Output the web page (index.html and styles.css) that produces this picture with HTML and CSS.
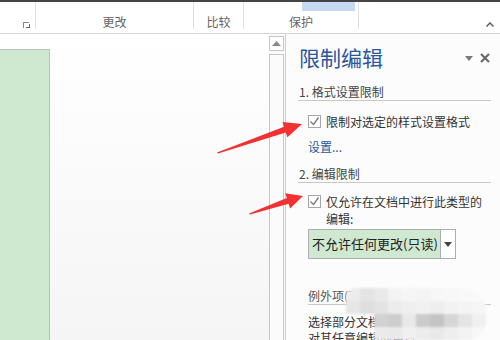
FILE: index.html
```html
<!DOCTYPE html>
<html lang="zh-CN">
<head>
  <meta charset="UTF-8">
  <meta name="viewport" content="width=device-width, initial-scale=1.0">
  <title>限制编辑</title>
  <link rel="stylesheet" href="styles.css">
</head>
<body>
  <div class="topbar"></div>
  <div class="ribbon">
    <div class="group group-first">
      <span class="launcher"></span>
    </div>
    <div class="group group-change"><span class="label">更改</span></div>
    <div class="group group-compare"><span class="label">比较</span></div>
    <div class="group group-protect">
      <div class="hilite"></div>
      <span class="label">保护</span>
    </div>
    <div class="group group-last">
      <svg class="caret" width="8" height="5" viewBox="0 0 8 5"><polyline points="0.5,4.5 4,1 7.5,4.5" fill="none" stroke="#555" stroke-width="1.4"/></svg>
    </div>
  </div>

  <div class="main">
    <div class="doc">
      <div class="page"></div>
    </div>
    <div class="scroll">
      <div class="scroll-btn">
        <svg width="9" height="5" viewBox="0 0 9 5"><polygon points="0,5 4.5,0 9,5" fill="#8a8a8a"/></svg>
      </div>
      <div class="scroll-track"></div>
    </div>

    <div class="pane">
      <div class="pane-head">
        <h1 class="pane-title">限制编辑</h1>
        <div class="pane-tools">
          <svg width="8" height="5" viewBox="0 0 8 5"><polygon points="0,0 8,0 4,5" fill="#777"/></svg>
          <svg width="10" height="10" viewBox="0 0 10 10"><path d="M1 1 L9 9 M9 1 L1 9" stroke="#666" stroke-width="2"/></svg>
        </div>
      </div>

      <h2 class="section">1. 格式设置限制</h2>
      <label class="check-row">
        <span class="box"><svg width="11" height="11" viewBox="0 0 11 11"><polyline points="1.5,5.5 4.5,8.5 9.5,1.5" fill="none" stroke="#777" stroke-width="1.3"/></svg></span>
        <span>限制对选定的样式设置格式</span>
      </label>
      <a class="link">设置...</a>

      <h2 class="section section-two">2. 编辑限制</h2>
      <label class="check-row check-row-two">
        <span class="box"><svg width="11" height="11" viewBox="0 0 11 11"><polyline points="1.5,5.5 4.5,8.5 9.5,1.5" fill="none" stroke="#777" stroke-width="1.3"/></svg></span>
        <span>仅允许在文档中进行此类型的<br>编辑:</span>
      </label>
      <div class="select">
        <span class="select-value">不允许任何更改(只读)</span>
        <span class="select-arrow"><svg width="8" height="5" viewBox="0 0 8 5"><polygon points="0,0 8,0 4,5" fill="#444"/></svg></span>
      </div>

      <h3 class="sub">例外项(可选)</h3>
      <p class="desc">选择部分文档内容，并选择可<br>对其任意编辑的用户。</p>
    </div>
  </div>

  <div class="mosaic">
    <span style="background:#ececec"></span><span style="background:#e4e4e4"></span><span style="background:#e9e9e9"></span><span style="background:#f3f3f3"></span><span style="background:#f6f6f6"></span><span style="background:#f4f4f4"></span><span style="background:#f7f7f7"></span><span style="background:#f8f8f8"></span><span style="background:#f9f9f9"></span><span style="background:#fafafa"></span>
    <span style="background:#e6e6e6"></span><span style="background:#dedede"></span><span style="background:#e3e3e3"></span><span style="background:#ececec"></span><span style="background:#efefef"></span><span style="background:#f1f1f1"></span><span style="background:#eeeeee"></span><span style="background:#f2f2f2"></span><span style="background:#f4f4f4"></span><span style="background:#f6f6f6"></span>
    <span></span><span></span><span style="background:#d2d2d2"></span><span style="background:#cdcdcd"></span><span style="background:#e8e8e8"></span><span style="background:#cbcbcb"></span><span style="background:#c4c4c4"></span><span style="background:#d6d6d6"></span><span style="background:#e4e4e4"></span><span style="background:#f0f0f0"></span>
    <span></span><span></span><span style="background:#ebebeb"></span><span style="background:#e9e9e9"></span><span style="background:#f0f0f0"></span><span style="background:#ececec"></span><span style="background:#e8e8e8"></span><span style="background:#eeeeee"></span><span style="background:#f3f3f3"></span><span style="background:#f7f7f7"></span>
  </div>

  <svg class="arrows" width="500" height="340" viewBox="0 0 500 340">
    <polygon points="217,152.5 284,126.8 282.4,122 302,124 287.4,137.2 285.8,132.5 218,153.5" fill="#f23232"/>
    <polygon points="249,213.5 286.8,197.9 285.3,193.2 303,196 290.1,208.4 288.6,203.7 250,214.5" fill="#f23232"/>
  </svg>
</body>
</html>
```

FILE: styles.css
```css
body {
  margin: 0;
  width: 500px;
  height: 340px;
  overflow: hidden;
  position: relative;
  font-family: "Noto Sans CJK SC", "Noto Sans", sans-serif;
  font-size: 12px;
  color: #444;
  background: #fff;
}
.topbar {
  height: 2px;
  background: #444;
}
.ribbon {
  display: flex;
  height: 31px;
  border-bottom: 1px solid #d4d4d4;
  background: #fff;
}
.group {
  height: 27px;
  border-right: 1px solid #e1e1e1;
  display: flex;
  flex-direction: column;
  justify-content: flex-end;
  align-items: center;
  box-sizing: border-box;
}
.group-first { width: 36px; align-items: flex-end; }
.group-change { width: 158px; }
.group-compare { width: 50px; }
.group-protect { width: 115px; position: relative; }
.group-last { flex: 1; border-right: none; align-items: flex-end; }
.label {
  line-height: 14px;
  color: #666;
}
.launcher {
  width: 5px;
  height: 5px;
  border-left: 1px solid #888;
  border-top: 1px solid #888;
  margin: 0 6px 1px 0;
  position: relative;
}
.launcher::after {
  content: "";
  position: absolute;
  right: -1px;
  bottom: 0;
  width: 3px;
  height: 3px;
  border-right: 1px solid #666;
  border-bottom: 1px solid #666;
}
.hilite {
  position: absolute;
  top: 0;
  left: 58px;
  width: 53px;
  height: 9px;
  background: #c5d9f1;
}
.caret {
  margin: 0 6px 2px 0;
}
.main {
  display: flex;
  height: 306px;
}
.doc {
  width: 269px;
  background: linear-gradient(#fff, #f5f5f5);
}
.page {
  margin-top: 15px;
  width: 49px;
  height: 300px;
  background: #cfe8d0;
  border-top: 1px solid #c0c0c0;
  border-right: 1px solid #bdbdbd;
}
.scroll {
  width: 17px;
  box-sizing: border-box;
  border-right: 1px solid #cfcfcf;
  display: flex;
  flex-direction: column;
  background: #fafafa;
}
.scroll-btn {
  margin-top: 2px;
  width: 15px;
  height: 15px;
  box-sizing: border-box;
  border: 1px solid #c6c6c6;
  background: #fff;
  display: flex;
  align-items: center;
  justify-content: center;
}
.scroll-track {
  margin-top: 3px;
  width: 15px;
  flex: 1;
  box-sizing: border-box;
  border: 1px solid #c6c6c6;
  border-bottom: none;
  background: #fbfbfb;
}
.pane {
  flex: 1;
  padding: 0 9px 0 12px;
  background: #fcfcfc;
}
.pane-head {
  margin-top: 10px;
  display: flex;
  justify-content: space-between;
  align-items: center;
}
.pane-title {
  margin: 0 0 0 1px;
  font-size: 21px;
  font-weight: normal;
  line-height: 26px;
  color: #2b579a;
}
.pane-tools {
  display: flex;
  align-items: center;
  gap: 7px;
  margin: 2px 1px 0 0;
}
.section {
  margin: 14px 0 0;
  font-size: 12px;
  font-weight: normal;
  line-height: 16px;
  color: #444;
  padding-left: 1px;
  border-bottom: 1px solid #c8c8c8;
}
.section-two {
  margin-top: 13px;
}
.check-row {
  display: flex;
  gap: 5px;
  margin: 14px 0 0 10px;
  line-height: 13px;
  color: #333;
}
.check-row-two {
  margin-top: 10px;
  line-height: 17px;
}
.box {
  width: 13px;
  height: 13px;
  box-sizing: border-box;
  border: 1px solid #a6a6a6;
  background: #fff;
  display: flex;
  align-items: center;
  justify-content: center;
  flex-shrink: 0;
}
.check-row-two .box {
  margin-top: 2px;
}
.link {
  display: block;
  margin: 12px 0 0 10px;
  line-height: 13px;
  color: #2b579a;
}
.select {
  display: flex;
  margin: 2px 0 0 10px;
  width: 148px;
  height: 30px;
  box-sizing: border-box;
  border: 1px solid #abadb3;
  background: #fff;
}
.select-value {
  flex: 1;
  background: #cfe8d0;
  border-right: 1px solid #abadb3;
  font-size: 13px;
  line-height: 28px;
  padding-left: 3px;
  color: #222;
}
.select-arrow {
  width: 14px;
  display: flex;
  align-items: center;
  justify-content: center;
}
.sub {
  margin: 29px 0 0 10px;
  font-size: 12px;
  font-weight: normal;
  line-height: 16px;
  color: #555;
  border-bottom: 1px solid #c8c8c8;
}
.desc {
  margin: 9px 0 0 10px;
  line-height: 16px;
  color: #333;
}
.mosaic {
  position: absolute;
  left: 346px;
  top: 288px;
  width: 140px;
  display: grid;
  grid-template-columns: repeat(10, 14px);
  grid-auto-rows: 13px;
  border-radius: 10px 22px 18px 6px;
  overflow: hidden;
  filter: blur(1px);
}
.arrows {
  position: absolute;
  left: 0;
  top: 0;
  pointer-events: none;
}
```
